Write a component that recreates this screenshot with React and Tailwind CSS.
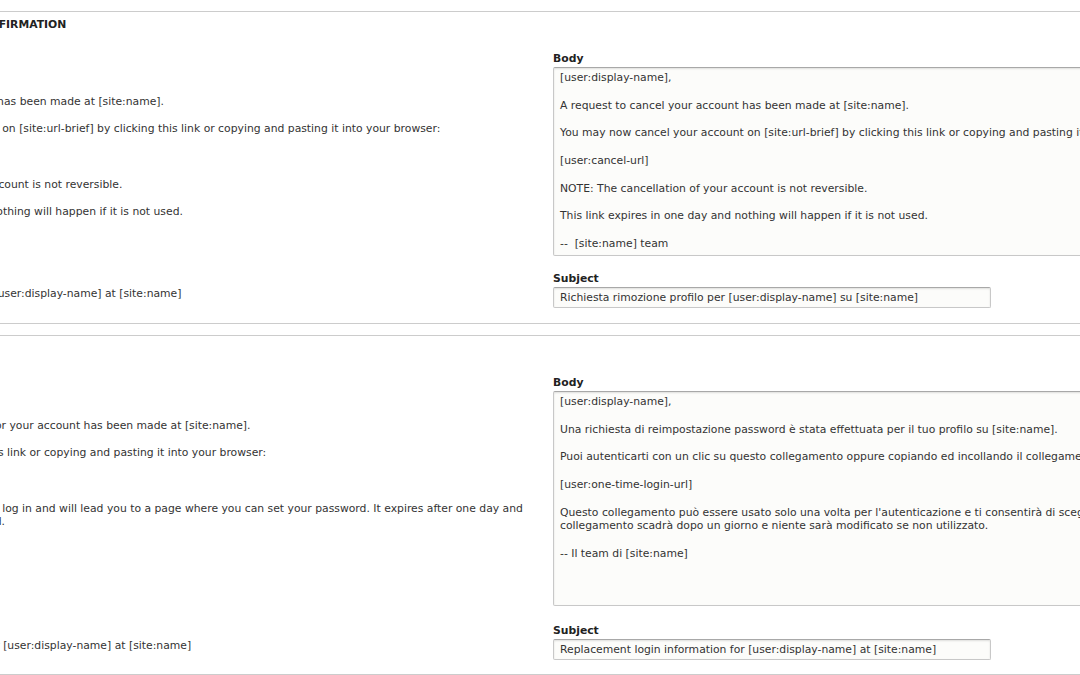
const S1_SOURCE = [
  "[user:display-name],",
  "A request to cancel your account has been made at [site:name].",
  "You may now cancel your account on [site:url-brief] by clicking this link or copying and pasting it into your browser:",
  "[user:cancel-url]",
  "NOTE: The cancellation of your account is not reversible.",
  "This link expires in one day and nothing will happen if it is not used.",
  "--  [site:name] team",
];

const S1_TEXTAREA = [
  "[user:display-name],",
  "",
  "A request to cancel your account has been made at [site:name].",
  "",
  "You may now cancel your account on [site:url-brief] by clicking this link or copying and pasting it into your browser:",
  "",
  "[user:cancel-url]",
  "",
  "NOTE: The cancellation of your account is not reversible.",
  "",
  "This link expires in one day and nothing will happen if it is not used.",
  "",
  "--  [site:name] team",
];

const S2_SOURCE = [
  "[user:display-name],",
  "A request to reset the password for your account has been made at [site:name].",
  "You may now log in by clicking this link or copying and pasting it into your browser:",
  "[user:one-time-login-url]",
  "This link can only be used once to log in and will lead you to a page where you can set your password. It expires after one day and nothing will happen if it's not used.",
  "--  [site:name] team",
];

const S2_TEXTAREA = [
  "[user:display-name],",
  "",
  "Una richiesta di reimpostazione password è stata effettuata per il tuo profilo su [site:name].",
  "",
  "Puoi autenticarti con un clic su questo collegamento oppure copiando ed incollando il collegamento nel tuo browser:",
  "",
  "[user:one-time-login-url]",
  "",
  "Questo collegamento può essere usato solo una volta per l'autenticazione e ti consentirà di scegliere una nuova password. Il",
  "collegamento scadrà dopo un giorno e niente sarà modificato se non utilizzato.",
  "",
  "-- Il team di [site:name]",
];

function Label({ children, className = "" }) {
  return <div className={"font-bold leading-[14px] text-[#222] " + className}>{children}</div>;
}

function Source({ paragraphs }) {
  return (
    <div className="flex flex-col gap-[13.83px]">
      {paragraphs.map((p, i) => (
        <p key={i} className="whitespace-pre-wrap">
          {p}
        </p>
      ))}
    </div>
  );
}

function FakeTextarea({ lines, height }) {
  return (
    <div
      className="w-[700px] overflow-hidden rounded-[2px] border border-[#c8c8c8] border-t-[#a8a8a8] bg-[#fcfcfa] px-[6px] pt-[3px] shadow-[inset_0_1px_2px_rgba(0,0,0,0.12)]"
      style={{ height }}
    >
      {lines.map((l, i) => (
        <div key={i} className="h-[13.83px] whitespace-pre">
          {l}
        </div>
      ))}
    </div>
  );
}

function Section({ title, source, sourceSubject, lines, taHeight, subject, className, subjectPad }) {
  return (
    <div className={"border border-[#cccccc] " + className}>
      <div className="pl-[13px] pt-[6px] text-[10.8px] font-bold uppercase leading-[14px] text-[#222]">
        {title}
      </div>
      <div className="grid grid-cols-[728px_700px] gap-x-[10px] px-[13px] pt-[20px]">
        <div>
          <Label className="mb-px">Body</Label>
          <Source paragraphs={source} />
        </div>
        <div>
          <Label className="mb-px">Body</Label>
          <FakeTextarea lines={lines} height={taHeight} />
        </div>
        <div className={subjectPad}>
          <Label className="mb-px">Subject</Label>
          <div className="whitespace-pre-wrap">{sourceSubject}</div>
        </div>
        <div className={subjectPad}>
          <Label className="mb-px">Subject</Label>
          <input
            readOnly
            value={subject}
            className="block h-[21px] w-[438px] rounded-[2px] border border-[#c8c8c8] border-t-[#a8a8a8] bg-[#fcfcfa] px-[6px] text-[10.8px] leading-[14px] text-[#333] shadow-[inset_0_1px_2px_rgba(0,0,0,0.12)] outline-none"
          />
        </div>
      </div>
    </div>
  );
}

export default function App() {
  return (
    <div
      className="h-[675px] w-[1080px] overflow-hidden bg-white text-[10.8px] leading-[13.83px] text-[#333]"
      style={{ fontFamily: '"DejaVu Sans", "Liberation Sans", sans-serif' }}
    >
      <div className="ml-[-199px] w-[1500px] pt-[11px]">
        <Section
          className="mb-[11px] pb-[15px]"
          subjectPad="pt-[16px]"
          title="Account cancellation confirmation"
          source={S1_SOURCE}
          sourceSubject="Account cancellation request for [user:display-name] at [site:name]"
          lines={S1_TEXTAREA}
          taHeight={189}
          subject="Richiesta rimozione profilo per [user:display-name] su [site:name]"
        />
        <Section
          className="pb-[14px]"
          subjectPad="pt-[18px]"
          title="Password recovery"
          source={S2_SOURCE}
          sourceSubject="Replacement login information for [user:display-name] at [site:name]"
          lines={S2_TEXTAREA}
          taHeight={215}
          subject="Replacement login information for [user:display-name] at [site:name]"
        />
      </div>
    </div>
  );
}
